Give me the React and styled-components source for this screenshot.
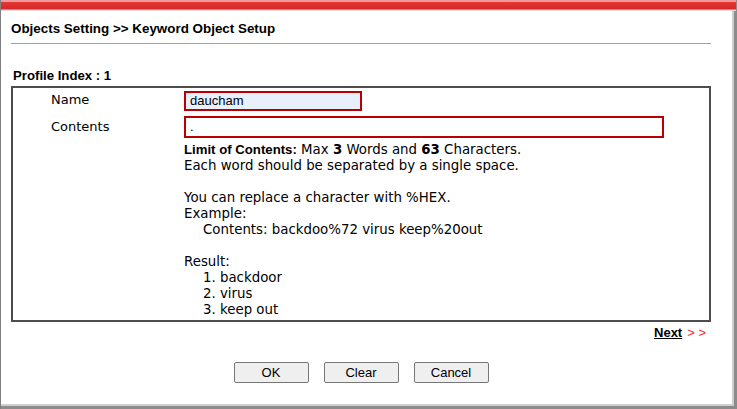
import React from "react";
import styled, { createGlobalStyle } from "styled-components";

const GlobalStyle = createGlobalStyle`
  html, body {
    margin: 0;
    padding: 0;
    background: #fff;
  }
  body {
    font-family: "DejaVu Sans", Verdana, sans-serif;
    color: #000;
  }
`;

const Frame = styled.div`
  box-sizing: border-box;
  width: 737px;
  height: 409px;
  border-left: 1px solid #808080;
  box-shadow: inset -3px 0 #8c8c8c, inset 0 -3px #8c8c8c,
    inset -5px 0 #cfcfcf, inset 0 -5px #cfcfcf;
  display: flex;
  flex-direction: column;
`;

const TopBar = styled.div`
  height: 11px;
  margin-right: 1px;
  background: linear-gradient(
    to bottom,
    #f29a9a 0,
    #f29a9a 2px,
    #e23838 2px,
    #d82424 9px,
    #9c9c9c 9px,
    #9c9c9c 10px,
    #dadada 10px
  );
`;

const Page = styled.div`
  width: 700px;
  padding-left: 10px;
  display: flex;
  flex-direction: column;
`;

const Title = styled.div`
  margin-top: 10px;
  font-family: "Liberation Sans", Arial, sans-serif;
  font-weight: bold;
  font-size: 13.4px;
  line-height: 16px;
`;

const Rule = styled.div`
  margin-top: 6px;
  height: 1px;
  background: #a0a0a0;
`;

const ProfileHeading = styled.div`
  margin-top: 24px;
  padding-left: 2px;
  font-family: "Liberation Sans", Arial, sans-serif;
  font-weight: bold;
  font-size: 13.2px;
  line-height: 16px;
`;

const Panel = styled.div`
  box-sizing: border-box;
  margin-top: 2px;
  border: 2px solid #4d4d4d;
  padding: 2px 0 2px;
  display: grid;
  grid-template-columns: 171px 1fr;
  row-gap: 5px;
  align-items: center;
`;

const Label = styled.div`
  padding-left: 38px;
  font-size: 13px;
  line-height: 16px;
`;

const Field = styled.input`
  box-sizing: border-box;
  width: ${(p) => p.$width}px;
  height: ${(p) => p.$height}px;
  border: 2px solid #b80000;
  padding: 0 4px;
  background: ${(p) => (p.$filled ? "#e8f0fe" : "#fff")};
  font-family: "Liberation Sans", Arial, sans-serif;
  font-size: 13px;
  color: #000;
  outline: none;
`;

const Notes = styled.div`
  grid-column: 2;
  margin-top: -1px;
  font-size: 13.35px;
  line-height: 16px;
`;

const Line = styled.div`
  min-height: 16px;
  padding-left: ${(p) => (p.$indent ? 19 : 0)}px;
  white-space: pre;
`;

const Strong = styled.b`
  font-family: ${(p) => (p.$narrow ? '"Liberation Sans", Arial, sans-serif' : "inherit")};
  font-size: ${(p) => (p.$narrow ? "13.2px" : "inherit")};
`;

const NextRow = styled.div`
  margin-top: 3px;
  padding-right: 5px;
  display: flex;
  justify-content: flex-end;
  align-items: center;
  font-family: "Liberation Sans", Arial, sans-serif;
  font-size: 13px;
  line-height: 16px;
`;

const NextLink = styled.a`
  font-weight: bold;
  color: #000;
  text-decoration: underline;
`;

const Arrows = styled.span`
  margin-left: 5px;
  color: #ff1a1a;
`;

const ButtonRow = styled.div`
  margin-top: 21px;
  display: flex;
  justify-content: center;
  gap: 15px;
`;

const Button = styled.button`
  box-sizing: border-box;
  width: 75px;
  height: 21px;
  padding: 0;
  background: #efefef;
  border: 1px solid #767676;
  border-radius: 2px;
  font-family: "Liberation Sans", Arial, sans-serif;
  font-size: 13px;
  color: #000;
`;

export default function App() {
  return (
    <>
      <GlobalStyle />
      <Frame>
        <TopBar />
        <Page>
          <Title>Objects Setting &gt;&gt; Keyword Object Setup</Title>
          <Rule />
          <ProfileHeading>Profile Index : 1</ProfileHeading>
          <Panel>
            <Label>Name</Label>
            <div>
              <Field $width={178} $height={20} $filled defaultValue="daucham" />
            </div>
            <Label>Contents</Label>
            <div>
              <Field $width={480} $height={22} defaultValue="." />
            </div>
            <Notes>
              <Line>
                <Strong $narrow>Limit of Contents:</Strong> Max <Strong>3</Strong>{" "}
                Words and <Strong>63</Strong> Characters.
              </Line>
              <Line>Each word should be separated by a single space.</Line>
              <Line />
              <Line>You can replace a character with %HEX.</Line>
              <Line>Example:</Line>
              <Line $indent>Contents: backdoo%72 virus keep%20out</Line>
              <Line />
              <Line>Result:</Line>
              <Line $indent>1. backdoor</Line>
              <Line $indent>2. virus</Line>
              <Line $indent>3. keep out</Line>
            </Notes>
          </Panel>
          <NextRow>
            <NextLink href="#">Next</NextLink>
            <Arrows>&gt; &gt;</Arrows>
          </NextRow>
          <ButtonRow>
            <Button>OK</Button>
            <Button>Clear</Button>
            <Button>Cancel</Button>
          </ButtonRow>
        </Page>
      </Frame>
    </>
  );
}
